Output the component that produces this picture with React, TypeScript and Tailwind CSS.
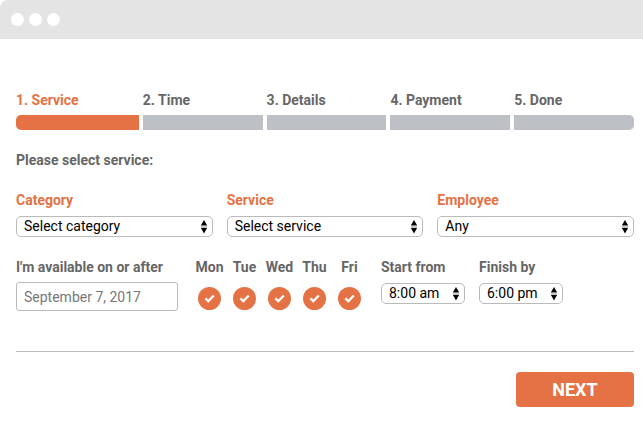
import { useState } from "react";
import type { ReactNode } from "react";
import { clsx } from "clsx";

const steps = ["Service", "Time", "Details", "Payment", "Done"];

const days = ["Mon", "Tue", "Wed", "Thu", "Fri"];

const hours = ["8:00 am", "9:00 am", "10:00 am", "5:00 pm", "6:00 pm"];

function Label({ htmlFor, accent, children }: { htmlFor: string; accent?: boolean; children: ReactNode }) {
  return (
    <label
      htmlFor={htmlFor}
      className={clsx("block font-bold whitespace-nowrap", accent ? "text-[#e47244]" : "text-[#666666]")}
    >
      {children}
    </label>
  );
}

function Select({ id, options, defaultValue }: { id: string; options: string[]; defaultValue?: string }) {
  return (
    <div className="relative mt-1.5">
      <select
        id={id}
        defaultValue={defaultValue}
        className="block h-[21px] w-full appearance-none rounded-[5px] border border-[#bababa] bg-white pr-4 pl-[7px] text-sm leading-[19px] text-black"
      >
        {options.map((option) => (
          <option key={option}>{option}</option>
        ))}
      </select>
      <svg viewBox="0 0 8 14" className="pointer-events-none absolute top-1 right-[5px] h-3.5 w-2" fill="#000">
        <path d="M4 0 7.2 5.6H0.8zM0.8 7.8h6.4L4 13.4z" />
        <path d="M0.8 6h6.4v1.2H0.8z" fill="#ccc" />
      </svg>
    </div>
  );
}

function DayCheckbox({ day }: { day: string }) {
  const [checked, setChecked] = useState(true);
  const id = `day-${day}`;

  return (
    <div className="flex w-[35px] flex-col items-center">
      <Label htmlFor={id}>{day}</Label>
      <div className="relative mt-2.5">
        <input
          id={id}
          type="checkbox"
          checked={checked}
          onChange={() => setChecked(!checked)}
          className="block size-[23px] appearance-none rounded-full bg-[#bdc1c6] checked:bg-[#e47244]"
        />
        {checked && (
          <svg viewBox="0 0 23 23" className="pointer-events-none absolute inset-0" fill="none">
            <path d="M7.4 11.4 10.3 14.2 15.8 8.5" stroke="#fff" strokeWidth="2.3" />
          </svg>
        )}
      </div>
    </div>
  );
}

export default function App() {
  return (
    <div className="bg-white font-['Roboto',sans-serif] text-sm leading-5">
      <header className="flex h-[39px] items-center gap-[5px] rounded-tl-lg bg-[#e4e4e4] pl-[11px]">
        <span className="size-[13px] rounded-full bg-white" />
        <span className="size-[13px] rounded-full bg-white" />
        <span className="size-[13px] rounded-full bg-white" />
      </header>

      <form className="pt-[51px] pr-[9px] pb-[30px] pl-4" onSubmit={(e) => e.preventDefault()}>
        <ol className="grid grid-cols-[41fr_40fr_40fr_40fr_40fr] gap-1">
          {steps.map((step, i) => (
            <li key={step} className={clsx("font-bold", i === 0 ? "text-[#e47244]" : "text-[#666666]")}>
              {i + 1}. {step}
              <div
                className={clsx(
                  "mt-[5px] h-[15px]",
                  i === 0 ? "rounded-l-[5px] bg-[#e47244]" : "bg-[#bdc1c6]",
                  i === steps.length - 1 && "rounded-r-[5px]"
                )}
              />
            </li>
          ))}
        </ol>

        <p className="mt-5 font-bold text-[#666666]">Please select service:</p>

        <div className="mt-5 grid grid-cols-3 gap-3.5">
          <div>
            <Label htmlFor="category" accent>Category</Label>
            <Select id="category" options={["Select category"]} />
          </div>
          <div>
            <Label htmlFor="service" accent>Service</Label>
            <Select id="service" options={["Select service"]} />
          </div>
          <div>
            <Label htmlFor="employee" accent>Employee</Label>
            <Select id="employee" options={["Any"]} />
          </div>
        </div>

        <div className="mt-5 flex flex-wrap gap-3.5">
          <div className="w-[162px]">
            <Label htmlFor="date">I'm available on or after</Label>
            <input
              id="date"
              type="text"
              defaultValue="September 7, 2017"
              className="mt-[5px] block h-[29px] w-full rounded-[3px] border border-[#bababa] px-[7px] text-sm text-[#777777]"
            />
          </div>
          <div className="flex">
            {days.map((day) => (
              <DayCheckbox key={day} day={day} />
            ))}
          </div>
          <div className="w-[84px]">
            <Label htmlFor="start">Start from</Label>
            <Select id="start" options={hours} defaultValue="8:00 am" />
          </div>
          <div className="w-[84px]">
            <Label htmlFor="finish">Finish by</Label>
            <Select id="finish" options={hours} defaultValue="6:00 pm" />
          </div>
        </div>

        <hr className="mt-10 border-[#bababa]" />

        <div className="mt-5 flex justify-end">
          <button type="submit" className="h-[35px] w-[118px] rounded bg-[#e47244] text-lg font-bold text-white">
            NEXT
          </button>
        </div>
      </form>
    </div>
  );
}
